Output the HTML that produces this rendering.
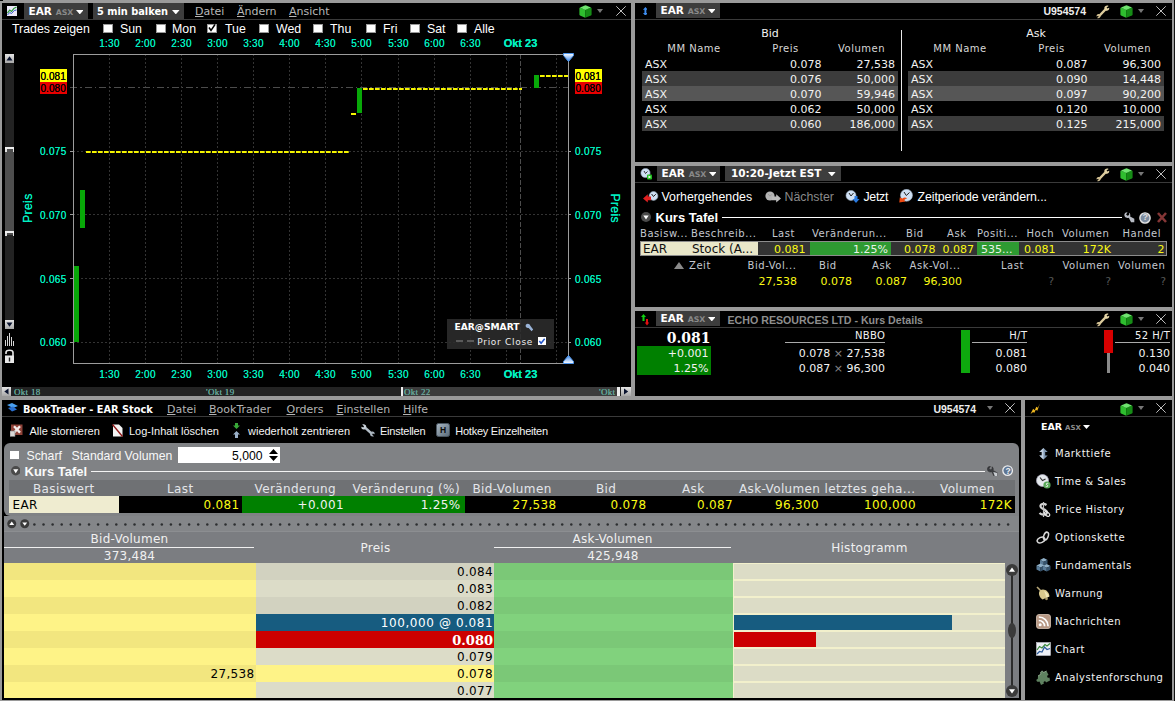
<!DOCTYPE html>
<html><head><meta charset="utf-8"><title>TWS</title>
<style>
html,body{margin:0;padding:0;}
body{width:1175px;height:701px;background:#9a9a9a;position:relative;overflow:hidden;font-family:"Liberation Sans",sans-serif;}
div,span,svg{position:absolute;}
span{white-space:nowrap;line-height:1;color:#fff;}
.tb{font-family:"DejaVu Sans","Liberation Sans",sans-serif;font-weight:bold;font-size:10.5px;color:#fff;transform:scaleY(0.93);transform-origin:0 85%;}
.tg{font-family:"DejaVu Sans","Liberation Sans",sans-serif;font-weight:bold;font-size:7.8px;color:#8a8a8a;}
.mn{font-family:"DejaVu Sans","Liberation Sans",sans-serif;font-size:11px;color:#b8b8b8;}
.v{font-family:"DejaVu Sans","Liberation Sans",sans-serif;font-size:11px;color:#f2f2f2;}
.a12{font-family:"Liberation Sans",sans-serif;font-size:12.35px;color:#fff;}
.ax{font-family:"Liberation Sans",sans-serif;font-size:10px;color:#00f0c0;letter-spacing:0.3px;text-shadow:0 0 0.5px #00f0c0;}
.y{color:#fafa14;}
</style></head>
<body>
<div style="left:2px;top:3px;width:629px;height:393px;background:#000;"></div>
<div style="left:635px;top:3px;width:537px;height:159px;background:#000;"></div>
<div style="left:635px;top:166px;width:537px;height:141px;background:#000;"></div>
<div style="left:635px;top:311px;width:537px;height:85px;background:#000;"></div>
<div style="left:2px;top:400px;width:1019px;height:300px;background:#000;"></div>
<div style="left:1025px;top:400px;width:147px;height:300px;background:#000;"></div>
<div style="left:1174px;top:0px;width:1px;height:701px;background:#111;"></div>
<div style="left:0px;top:0px;width:3px;height:1px;background:#000;"></div>
<svg style="left:7px;top:6px" width="10" height="10" viewBox="0 0 11 10" preserveAspectRatio="none"><rect width="11" height="10" fill="#ece8f8"/><path d="M0.5,7 L3,4 L5,5.5 L7.5,2.5 L10.5,1" stroke="#2a9a3a" stroke-width="1.2" fill="none"/><path d="M0.5,9 L3,6.5 L5,7.5 L8,4.5 L10.5,4" stroke="#3355cc" stroke-width="1" fill="none"/></svg>
<div style="left:24px;top:3px;width:64px;height:16px;background:#3d3d3d;"></div>
<span class="tb" style="top:6.3px;left:28.5px;">EAR</span>
<span class="tg" style="top:8.8px;left:55.7px;">ASX</span>
<svg style="left:75.6px;top:10px" width="7.6" height="4.4" viewBox="0 0 7.6 4.4"><polygon points="0,0 7.6,0 3.8,4.4" fill="#fff"/></svg>
<div style="left:93px;top:3px;width:91px;height:16px;background:#3d3d3d;"></div>
<span class="tb" style="top:6.8px;left:97px;font-family:'DejaVu Sans Condensed','DejaVu Sans',sans-serif;font-size:10.9px;">5 min balken</span>
<svg style="left:172px;top:10px" width="7.6" height="4.4" viewBox="0 0 7.6 4.4"><polygon points="0,0 7.6,0 3.8,4.4" fill="#fff"/></svg>
<span class="mn" style="top:6px;left:195px;"><u>D</u>atei</span>
<span class="mn" style="top:6px;left:237px;"><u>Ä</u>ndern</span>
<span class="mn" style="top:6px;left:289px;"><u>A</u>nsicht</span>
<svg style="left:579.0px;top:4.6px" width="13" height="13" viewBox="0 0 13 13">
<path d="M1,2.6 Q0.4,2.9 0.4,3.6 V9.6 Q0.4,10.3 1,10.6 L6.2,12.8 L6.2,4.8 Z" fill="#2fbe2f"/>
<path d="M12,2.6 Q12.6,2.9 12.6,3.6 V9.6 Q12.6,10.3 12,10.6 L6.2,12.8 L6.2,4.8 Z" fill="#168c16"/>
<path d="M1,2.6 L5.8,0.4 Q6.5,0.2 7.2,0.4 L12,2.6 L6.2,5 Z" fill="#6fe46f"/></svg>
<svg style="left:597px;top:9px" width="6" height="4" viewBox="0 0 6 4"><polygon points="0,0 6,0 3.0,4" fill="#777"/></svg>
<svg style="left:616px;top:6px" width="10" height="10" viewBox="0 0 10 10"><path d="M0.3,0.3 L9.7,9.7 M9.7,0.3 L0.3,9.7" stroke="#d4d4d4" stroke-width="0.9" fill="none"/></svg>
<div style="left:2px;top:19px;width:629px;height:1px;background:#3a3a3a;"></div>
<span class="a12" style="top:23px;left:12px;">Trades zeigen</span>
<div style="left:103px;top:23.5px;width:9.5px;height:9.5px;background:#fff;border:1px solid #999;box-sizing:border-box;"></div>
<span class="a12" style="top:23px;left:120px;">Sun</span>
<div style="left:156px;top:23.5px;width:9.5px;height:9.5px;background:#fff;border:1px solid #999;box-sizing:border-box;"></div>
<span class="a12" style="top:23px;left:172px;">Mon</span>
<div style="left:207px;top:23.5px;width:9.5px;height:9.5px;background:#fff;border:1px solid #999;box-sizing:border-box;"></div>
<span class="a12" style="top:23px;left:225px;">Tue</span>
<div style="left:259px;top:23.5px;width:9.5px;height:9.5px;background:#fff;border:1px solid #999;box-sizing:border-box;"></div>
<span class="a12" style="top:23px;left:276px;">Wed</span>
<div style="left:313px;top:23.5px;width:9.5px;height:9.5px;background:#fff;border:1px solid #999;box-sizing:border-box;"></div>
<span class="a12" style="top:23px;left:330px;">Thu</span>
<div style="left:366px;top:23.5px;width:9.5px;height:9.5px;background:#fff;border:1px solid #999;box-sizing:border-box;"></div>
<span class="a12" style="top:23px;left:383px;">Fri</span>
<div style="left:410px;top:23.5px;width:9.5px;height:9.5px;background:#fff;border:1px solid #999;box-sizing:border-box;"></div>
<span class="a12" style="top:23px;left:427px;">Sat</span>
<div style="left:457px;top:23.5px;width:9.5px;height:9.5px;background:#fff;border:1px solid #999;box-sizing:border-box;"></div>
<span class="a12" style="top:23px;left:474px;">Alle</span>
<svg style="left:207px;top:23px" width="10" height="10" viewBox="0 0 10 10"><path d="M2,4.5 L4,7.5 L8,1.5" stroke="#000" stroke-width="1.5" fill="none"/></svg>
<svg style="left:0;top:0" width="632" height="400" viewBox="0 0 632 400" shape-rendering="crispEdges"><line x1="109.5" y1="54" x2="109.5" y2="363" stroke="#333" stroke-dasharray="2,2"/><line x1="145.5" y1="54" x2="145.5" y2="363" stroke="#333" stroke-dasharray="2,2"/><line x1="181.5" y1="54" x2="181.5" y2="363" stroke="#333" stroke-dasharray="2,2"/><line x1="217.5" y1="54" x2="217.5" y2="363" stroke="#333" stroke-dasharray="2,2"/><line x1="253.5" y1="54" x2="253.5" y2="363" stroke="#333" stroke-dasharray="2,2"/><line x1="289.5" y1="54" x2="289.5" y2="363" stroke="#333" stroke-dasharray="2,2"/><line x1="325.5" y1="54" x2="325.5" y2="363" stroke="#333" stroke-dasharray="2,2"/><line x1="361.5" y1="54" x2="361.5" y2="363" stroke="#333" stroke-dasharray="2,2"/><line x1="398.5" y1="54" x2="398.5" y2="363" stroke="#333" stroke-dasharray="2,2"/><line x1="434.5" y1="54" x2="434.5" y2="363" stroke="#333" stroke-dasharray="2,2"/><line x1="470.5" y1="54" x2="470.5" y2="363" stroke="#333" stroke-dasharray="2,2"/><line x1="506.5" y1="54" x2="506.5" y2="363" stroke="#333" stroke-dasharray="2,2"/><line x1="556.5" y1="54" x2="556.5" y2="363" stroke="#333" stroke-dasharray="2,2"/><line x1="73" y1="151.5" x2="568" y2="151.5" stroke="#333" stroke-dasharray="2,2"/><line x1="73" y1="214.5" x2="568" y2="214.5" stroke="#333" stroke-dasharray="2,2"/><line x1="73" y1="278.5" x2="568" y2="278.5" stroke="#333" stroke-dasharray="2,2"/><line x1="73" y1="342.5" x2="568" y2="342.5" stroke="#333" stroke-dasharray="2,2"/><line x1="70" y1="87.5" x2="568" y2="87.5" stroke="#4c4c4c" stroke-dasharray="7,3,1.5,3"/><line x1="520.5" y1="54" x2="520.5" y2="363" stroke="#4c4c4c" stroke-width="1" stroke-dasharray="5,2"/><path d="M73.5,363.5 L73.5,54.5 L568.5,54.5 L568.5,363.5 Z" stroke="#9c9c9c" fill="none"/><line x1="70" y1="151.5" x2="73" y2="151.5" stroke="#9c9c9c"/><line x1="568" y1="151.5" x2="571" y2="151.5" stroke="#9c9c9c"/><line x1="70" y1="214.5" x2="73" y2="214.5" stroke="#9c9c9c"/><line x1="568" y1="214.5" x2="571" y2="214.5" stroke="#9c9c9c"/><line x1="70" y1="278.5" x2="73" y2="278.5" stroke="#9c9c9c"/><line x1="568" y1="278.5" x2="571" y2="278.5" stroke="#9c9c9c"/><line x1="70" y1="342.5" x2="73" y2="342.5" stroke="#9c9c9c"/><line x1="568" y1="342.5" x2="571" y2="342.5" stroke="#9c9c9c"/><rect x="74" y="266" width="5" height="76" fill="#08a808"/><rect x="80" y="190" width="5" height="38" fill="#08a808"/><rect x="357" y="88" width="5" height="25" fill="#08a808"/><rect x="534" y="75" width="5" height="13" fill="#08a808"/><line x1="86" y1="152" x2="350" y2="152" stroke="#f4f400" stroke-width="2" stroke-dasharray="4.7,1.3" shape-rendering="auto"/><line x1="351" y1="114" x2="356" y2="114" stroke="#f4f400" stroke-width="2"/><line x1="363" y1="89" x2="522" y2="89" stroke="#f4f400" stroke-width="2" stroke-dasharray="4.7,1.3" shape-rendering="auto"/><line x1="540" y1="76" x2="568" y2="76" stroke="#f4f400" stroke-width="2" stroke-dasharray="4.7,1.3" shape-rendering="auto"/></svg>
<span class="ax" style="top:38.5px;left:-40.5px;width:300px;text-align:center;">1:30</span>
<span class="ax" style="top:369.5px;left:-40.5px;width:300px;text-align:center;">1:30</span>
<span class="ax" style="top:38.5px;left:-4.5px;width:300px;text-align:center;">2:00</span>
<span class="ax" style="top:369.5px;left:-4.5px;width:300px;text-align:center;">2:00</span>
<span class="ax" style="top:38.5px;left:31.5px;width:300px;text-align:center;">2:30</span>
<span class="ax" style="top:369.5px;left:31.5px;width:300px;text-align:center;">2:30</span>
<span class="ax" style="top:38.5px;left:67.5px;width:300px;text-align:center;">3:00</span>
<span class="ax" style="top:369.5px;left:67.5px;width:300px;text-align:center;">3:00</span>
<span class="ax" style="top:38.5px;left:103.5px;width:300px;text-align:center;">3:30</span>
<span class="ax" style="top:369.5px;left:103.5px;width:300px;text-align:center;">3:30</span>
<span class="ax" style="top:38.5px;left:139.5px;width:300px;text-align:center;">4:00</span>
<span class="ax" style="top:369.5px;left:139.5px;width:300px;text-align:center;">4:00</span>
<span class="ax" style="top:38.5px;left:175.5px;width:300px;text-align:center;">4:30</span>
<span class="ax" style="top:369.5px;left:175.5px;width:300px;text-align:center;">4:30</span>
<span class="ax" style="top:38.5px;left:211.5px;width:300px;text-align:center;">5:00</span>
<span class="ax" style="top:369.5px;left:211.5px;width:300px;text-align:center;">5:00</span>
<span class="ax" style="top:38.5px;left:248.5px;width:300px;text-align:center;">5:30</span>
<span class="ax" style="top:369.5px;left:248.5px;width:300px;text-align:center;">5:30</span>
<span class="ax" style="top:38.5px;left:284.5px;width:300px;text-align:center;">6:00</span>
<span class="ax" style="top:369.5px;left:284.5px;width:300px;text-align:center;">6:00</span>
<span class="ax" style="top:38.5px;left:320.5px;width:300px;text-align:center;">6:30</span>
<span class="ax" style="top:369.5px;left:320.5px;width:300px;text-align:center;">6:30</span>
<span class="ax" style="top:38px;left:370.5px;width:300px;text-align:center;font-weight:bold;font-size:11px;letter-spacing:0;">Okt 23</span>
<span class="ax" style="top:369px;left:370.5px;width:300px;text-align:center;font-weight:bold;font-size:11px;letter-spacing:0;">Okt 23</span>
<span class="ax" style="top:147.3px;right:1108.5px;">0.075</span>
<span class="ax" style="top:147.3px;left:575px;">0.075</span>
<span class="ax" style="top:211.0px;right:1108.5px;">0.070</span>
<span class="ax" style="top:211.0px;left:575px;">0.070</span>
<span class="ax" style="top:274.6px;right:1108.5px;">0.065</span>
<span class="ax" style="top:274.6px;left:575px;">0.065</span>
<span class="ax" style="top:338.3px;right:1108.5px;">0.060</span>
<span class="ax" style="top:338.3px;left:575px;">0.060</span>
<div style="left:40px;top:69px;width:27px;height:12.5px;background:#ffff00;"></div>
<span class="ax" style="top:71.5px;left:40.5px;color:#000;text-shadow:0 0 0.4px #000;letter-spacing:0.05px;">0.081</span>
<div style="left:40px;top:81.5px;width:27px;height:12.5px;background:#e80000;"></div>
<span class="ax" style="top:84px;left:40.5px;color:#000;text-shadow:0 0 0.4px #000;letter-spacing:0.05px;">0.080</span>
<div style="left:575px;top:69px;width:27px;height:12.5px;background:#ffff00;"></div>
<span class="ax" style="top:71.5px;left:575.5px;color:#000;text-shadow:0 0 0.4px #000;letter-spacing:0.05px;">0.081</span>
<div style="left:575px;top:81.5px;width:27px;height:12.5px;background:#e80000;"></div>
<span class="ax" style="top:84px;left:575.5px;color:#000;text-shadow:0 0 0.4px #000;letter-spacing:0.05px;">0.080</span>
<span class="ax" style="top:0px;left:0px;left:8px;top:202px;font-size:12.3px;transform:rotate(-90deg);transform-origin:center;width:40px;text-align:center;">Preis</span>
<span class="ax" style="top:0px;left:0px;left:594.5px;top:202px;font-size:12.3px;transform:rotate(90deg);transform-origin:center;width:40px;text-align:center;">Preis</span>
<div style="left:5px;top:54px;width:9px;height:275px;background:#232323;"></div>
<div style="left:5px;top:54px;width:9px;height:9px;background:linear-gradient(#e4e4e4,#a8a8a8);"></div>
<svg style="left:5px;top:54px" width="9" height="9" viewBox="0 0 9 9"><polygon points="4.5,2.3 7.5,6.5 1.5,6.5" fill="#0a1430"/></svg>
<div style="left:5px;top:148px;width:9px;height:87px;background:#4e4e4e;"></div>
<div style="left:5px;top:147px;width:9px;height:2px;background:#f0f0f0;"></div>
<div style="left:5px;top:149px;width:1.5px;height:3px;background:#e0e0e0;"></div>
<div style="left:12.5px;top:149px;width:1.5px;height:3px;background:#e0e0e0;"></div>
<div style="left:5px;top:231px;width:9px;height:2px;background:#f0f0f0;"></div>
<div style="left:5px;top:233px;width:1.5px;height:3px;background:#e0e0e0;"></div>
<div style="left:12.5px;top:233px;width:1.5px;height:3px;background:#e0e0e0;"></div>
<div style="left:5px;top:320px;width:9px;height:9px;background:linear-gradient(#e4e4e4,#a8a8a8);"></div>
<svg style="left:5px;top:320px" width="9" height="9" viewBox="0 0 9 9"><polygon points="4.5,6.7 7.5,2.5 1.5,2.5" fill="#0a1430"/></svg>
<svg style="left:5px;top:333px" width="9" height="13" viewBox="0 0 9 13" shape-rendering="crispEdges"><path d="M0.5,13 V7 M2.5,13 V3 M4.5,13 V0 M6.5,13 V4 M8.5,13 V8" stroke="#d8d8d8" stroke-width="1"/></svg>
<svg style="left:5px;top:349px" width="9" height="14" viewBox="0 0 9 14"><path d="M1,5 V3.5 C1,0.5 8,0.5 8,3.5 V7" stroke="#e8e8e8" stroke-width="1.6" fill="none"/><rect x="0" y="6.5" width="9" height="7.5" fill="#e8e8e8"/><rect x="3.8" y="8.5" width="1.4" height="4" fill="#222"/></svg>
<div style="left:447px;top:319px;width:107px;height:30px;background:rgba(44,44,44,0.88);"></div>
<span class="tb" style="top:323.3px;left:454.5px;font-size:9.15px;">EAR@SMART</span>
<span class="mn" style="top:337.6px;left:477.3px;font-size:9px;letter-spacing:0.7px;color:#ececec;">Prior Close</span>
<div style="left:455.5px;top:339.5px;width:7px;height:2px;background:#5a5a5a;"></div>
<div style="left:466.5px;top:339.5px;width:7px;height:2px;background:#5a5a5a;"></div>
<svg style="left:525px;top:323px" width="9" height="9" viewBox="0 0 11 11"><path d="M1,2 C3,0 6,1 6.5,3.5 L10,8 L8,10 L4.5,6 C2,6.5 0,4.5 1,2 Z" fill="#9ab4d8"/></svg>
<div style="left:537.7px;top:337px;width:8px;height:8px;background:#fff;"></div>
<svg style="left:537.7px;top:337px" width="8" height="8" viewBox="0 0 9 9"><path d="M1.5,4.5 L3.5,7 L7.5,2" stroke="#2255cc" stroke-width="1.7" fill="none"/></svg>
<div style="left:2px;top:387px;width:629px;height:9px;background:#232323;"></div>
<div style="left:402px;top:387px;width:216px;height:9px;background:#3c3c3c;"></div>
<div style="left:2px;top:387px;width:9px;height:9px;background:linear-gradient(#e4e4e4,#a8a8a8);"></div>
<svg style="left:2px;top:387px" width="9" height="9" viewBox="0 0 9 9"><polygon points="2.3,4.5 6.5,1.5 6.5,7.5" fill="#0a1430"/></svg>
<div style="left:621px;top:387px;width:10px;height:9px;background:linear-gradient(#e4e4e4,#a8a8a8);"></div>
<svg style="left:621px;top:387px" width="10" height="9" viewBox="0 0 10 9"><polygon points="7.2,4.5 3.0,1.5 3.0,7.5" fill="#0a1430"/></svg>
<div style="left:401px;top:387px;width:2px;height:9px;background:#eee;"></div>
<div style="left:617px;top:387px;width:3px;height:9px;background:#eee;"></div>
<span class="ax" style="top:387.5px;left:14px;font-family:'Liberation Serif',serif;font-size:9px;color:#8c8c8c;">Okt 18</span>
<span class="ax" style="top:387.5px;left:206px;font-family:'Liberation Serif',serif;font-size:9px;color:#8c8c8c;">'Okt 19</span>
<span class="ax" style="top:387.5px;left:404px;font-family:'Liberation Serif',serif;font-size:9px;color:#8c8c8c;">Okt 22</span>
<span class="ax" style="top:387.5px;left:599px;font-family:'Liberation Serif',serif;font-size:9px;color:#8c8c8c;">'Okt</span>
<svg style="left:563px;top:53px" width="11" height="9" viewBox="0 0 11 9"><defs><linearGradient id="sg" x1="0" y1="0" x2="0" y2="1"><stop offset="0" stop-color="#fff"/><stop offset="1" stop-color="#3a86ea"/></linearGradient></defs><path d="M0.5,0.5 H10.5 V2.5 L5.5,8.5 L0.5,2.5 Z" fill="url(#sg)" stroke="#4f97ee" stroke-width="1"/></svg>
<svg style="left:563px;top:355px" width="11" height="9" viewBox="0 0 11 9"><defs><linearGradient id="sg2" x1="0" y1="0" x2="0" y2="1"><stop offset="0" stop-color="#3a86ea"/><stop offset="1" stop-color="#fff"/></linearGradient></defs><path d="M0.5,8.5 H10.5 V6.5 L5.5,0.5 L0.5,6.5 Z" fill="url(#sg2)" stroke="#4f97ee" stroke-width="1"/></svg>
<svg style="left:642.5px;top:6.5px" width="4.8" height="8.8" viewBox="0 0 6 11"><path d="M3,0 L6,3.5 H4.2 V7.5 H6 L3,11 L0,7.5 H1.8 V3.5 H0 Z" fill="#3d8df0"/></svg>
<div style="left:656px;top:3px;width:64px;height:15px;background:#3d3d3d;"></div>
<span class="tb" style="top:5.3px;left:660.5px;">EAR</span>
<span class="tg" style="top:7.8px;left:687.7px;">ASX</span>
<svg style="left:707.6px;top:9px" width="7.6" height="4.4" viewBox="0 0 7.6 4.4"><polygon points="0,0 7.6,0 3.8,4.4" fill="#fff"/></svg>
<span class="a12" style="top:6px;right:89px;font-weight:bold;font-size:10.5px;color:#eee;">U954574</span>
<svg style="left:1096px;top:4.5px" width="14" height="14" viewBox="0 0 14 14">
<path d="M3.2,11 L10.2,3.6" stroke="#dccb9c" stroke-width="2.3" stroke-linecap="butt" fill="none"/>
<path d="M8.3,3.2 C8.2,1 10.8,-0.2 12.6,0.9 L10.6,2.4 L11.2,3.6 L13.2,2.8 C13.6,5 11.4,6.4 9.6,5.4 Z" fill="#e4d4a6"/>
<path d="M4.6,10.6 C4.9,12.6 2.8,13.8 1,13 L2.6,11.8 L2.2,10.8 L0.6,11.4 C0.2,9.6 2,8.4 3.6,9.2 Z" fill="#d4c294"/></svg>
<svg style="left:1119.5px;top:4.6px" width="13" height="13" viewBox="0 0 13 13">
<path d="M1,2.6 Q0.4,2.9 0.4,3.6 V9.6 Q0.4,10.3 1,10.6 L6.2,12.8 L6.2,4.8 Z" fill="#2fbe2f"/>
<path d="M12,2.6 Q12.6,2.9 12.6,3.6 V9.6 Q12.6,10.3 12,10.6 L6.2,12.8 L6.2,4.8 Z" fill="#168c16"/>
<path d="M1,2.6 L5.8,0.4 Q6.5,0.2 7.2,0.4 L12,2.6 L6.2,5 Z" fill="#6fe46f"/></svg>
<svg style="left:1138px;top:9px" width="6" height="4" viewBox="0 0 6 4"><polygon points="0,0 6,0 3.0,4" fill="#777"/></svg>
<svg style="left:1156px;top:6px" width="10" height="10" viewBox="0 0 10 10"><path d="M0.3,0.3 L9.7,9.7 M9.7,0.3 L0.3,9.7" stroke="#d4d4d4" stroke-width="0.9" fill="none"/></svg>
<div style="left:635px;top:19px;width:537px;height:1px;background:#3a3a3a;"></div>
<span class="v" style="top:28px;left:620px;width:300px;text-align:center;">Bid</span>
<span class="v" style="top:28px;left:886px;width:300px;text-align:center;">Ask</span>
<div style="left:901px;top:30px;width:1px;height:121px;background:#e8e8e8;"></div>
<span class="mn" style="top:43.5px;left:544px;width:300px;text-align:center;font-size:10px;letter-spacing:0.5px;color:#d6d6d6;">MM Name</span>
<span class="mn" style="top:43.5px;left:635.5px;width:300px;text-align:center;font-size:10px;letter-spacing:0.5px;color:#d6d6d6;">Preis</span>
<span class="mn" style="top:43.5px;left:711.5px;width:300px;text-align:center;font-size:10px;letter-spacing:0.5px;color:#d6d6d6;">Volumen</span>
<span class="v" style="top:59px;left:645px;">ASX</span>
<span class="v" style="top:59px;right:353.5px;">0.078</span>
<span class="v" style="top:59px;right:280px;">27,538</span>
<div style="left:642px;top:71px;width:256px;height:15px;background:#3c3c3c;"></div>
<span class="v" style="top:74px;left:645px;">ASX</span>
<span class="v" style="top:74px;right:353.5px;">0.076</span>
<span class="v" style="top:74px;right:280px;">50,000</span>
<div style="left:642px;top:86px;width:256px;height:15px;background:#565656;"></div>
<span class="v" style="top:89px;left:645px;">ASX</span>
<span class="v" style="top:89px;right:353.5px;">0.070</span>
<span class="v" style="top:89px;right:280px;">59,946</span>
<span class="v" style="top:104px;left:645px;">ASX</span>
<span class="v" style="top:104px;right:353.5px;">0.062</span>
<span class="v" style="top:104px;right:280px;">50,000</span>
<div style="left:642px;top:116px;width:256px;height:15px;background:#3c3c3c;"></div>
<span class="v" style="top:119px;left:645px;">ASX</span>
<span class="v" style="top:119px;right:353.5px;">0.060</span>
<span class="v" style="top:119px;right:280px;">186,000</span>
<span class="mn" style="top:43.5px;left:810px;width:300px;text-align:center;font-size:10px;letter-spacing:0.5px;color:#d6d6d6;">MM Name</span>
<span class="mn" style="top:43.5px;left:901.5px;width:300px;text-align:center;font-size:10px;letter-spacing:0.5px;color:#d6d6d6;">Preis</span>
<span class="mn" style="top:43.5px;left:977.5px;width:300px;text-align:center;font-size:10px;letter-spacing:0.5px;color:#d6d6d6;">Volumen</span>
<span class="v" style="top:59px;left:911px;">ASX</span>
<span class="v" style="top:59px;right:87.5px;">0.087</span>
<span class="v" style="top:59px;right:14px;">96,300</span>
<div style="left:908px;top:71px;width:256px;height:15px;background:#3c3c3c;"></div>
<span class="v" style="top:74px;left:911px;">ASX</span>
<span class="v" style="top:74px;right:87.5px;">0.090</span>
<span class="v" style="top:74px;right:14px;">14,448</span>
<div style="left:908px;top:86px;width:256px;height:15px;background:#565656;"></div>
<span class="v" style="top:89px;left:911px;">ASX</span>
<span class="v" style="top:89px;right:87.5px;">0.097</span>
<span class="v" style="top:89px;right:14px;">90,200</span>
<span class="v" style="top:104px;left:911px;">ASX</span>
<span class="v" style="top:104px;right:87.5px;">0.120</span>
<span class="v" style="top:104px;right:14px;">10,000</span>
<div style="left:908px;top:116px;width:256px;height:15px;background:#3c3c3c;"></div>
<span class="v" style="top:119px;left:911px;">ASX</span>
<span class="v" style="top:119px;right:87.5px;">0.125</span>
<span class="v" style="top:119px;right:14px;">215,000</span>
<svg style="left:640px;top:168px" width="13" height="12" viewBox="0 0 13 12"><circle cx="5.5" cy="5" r="4.6" fill="#cfe0f4" stroke="#9ab" stroke-width="0.6"/><path d="M4,3 L5.5,5.5 L7.5,3.5" stroke="#222" stroke-width="0.9" fill="none"/><rect x="7" y="6.5" width="5" height="5" rx="1" fill="#20c020"/><path d="M8.5,7.5 L11,9 L8.5,10.5 Z" fill="#fff"/></svg>
<div style="left:657px;top:166px;width:63px;height:15px;background:#3d3d3d;"></div>
<span class="tb" style="top:168.3px;left:661.5px;">EAR</span>
<span class="tg" style="top:170.8px;left:688.7px;">ASX</span>
<svg style="left:708.6px;top:172px" width="7.6" height="4.4" viewBox="0 0 7.6 4.4"><polygon points="0,0 7.6,0 3.8,4.4" fill="#fff"/></svg>
<div style="left:725px;top:166px;width:116px;height:15px;background:#3d3d3d;"></div>
<span class="tb" style="top:168.3px;left:731px;">10:20-Jetzt EST</span>
<svg style="left:828px;top:172px" width="7.6" height="4.4" viewBox="0 0 7.6 4.4"><polygon points="0,0 7.6,0 3.8,4.4" fill="#fff"/></svg>
<svg style="left:1096px;top:167.5px" width="14" height="14" viewBox="0 0 14 14">
<path d="M3.2,11 L10.2,3.6" stroke="#dccb9c" stroke-width="2.3" stroke-linecap="butt" fill="none"/>
<path d="M8.3,3.2 C8.2,1 10.8,-0.2 12.6,0.9 L10.6,2.4 L11.2,3.6 L13.2,2.8 C13.6,5 11.4,6.4 9.6,5.4 Z" fill="#e4d4a6"/>
<path d="M4.6,10.6 C4.9,12.6 2.8,13.8 1,13 L2.6,11.8 L2.2,10.8 L0.6,11.4 C0.2,9.6 2,8.4 3.6,9.2 Z" fill="#d4c294"/></svg>
<svg style="left:1119.5px;top:167.6px" width="13" height="13" viewBox="0 0 13 13">
<path d="M1,2.6 Q0.4,2.9 0.4,3.6 V9.6 Q0.4,10.3 1,10.6 L6.2,12.8 L6.2,4.8 Z" fill="#2fbe2f"/>
<path d="M12,2.6 Q12.6,2.9 12.6,3.6 V9.6 Q12.6,10.3 12,10.6 L6.2,12.8 L6.2,4.8 Z" fill="#168c16"/>
<path d="M1,2.6 L5.8,0.4 Q6.5,0.2 7.2,0.4 L12,2.6 L6.2,5 Z" fill="#6fe46f"/></svg>
<svg style="left:1138px;top:172px" width="6" height="4" viewBox="0 0 6 4"><polygon points="0,0 6,0 3.0,4" fill="#777"/></svg>
<svg style="left:1156px;top:169px" width="10" height="10" viewBox="0 0 10 10"><path d="M0.3,0.3 L9.7,9.7 M9.7,0.3 L0.3,9.7" stroke="#d4d4d4" stroke-width="0.9" fill="none"/></svg>
<div style="left:635px;top:182px;width:537px;height:1px;background:#3a3a3a;"></div>
<svg style="left:642.5px;top:191px" width="16" height="12" viewBox="0 0 16 12"><circle cx="10.5" cy="5" r="4.4" fill="#cfe0f4" stroke="#9ab" stroke-width="0.6"/><path d="M8.6,3 L10.5,5.5 L12.8,3.2" stroke="#222" stroke-width="1" fill="none"/><path d="M0,7.4 L4.8,3.2 V5.6 H8 V9.2 H4.8 V11.6 Z" fill="#e02020"/></svg>
<span class="a12" style="top:190.5px;left:661.5px;">Vorhergehendes</span>
<svg style="left:764.5px;top:191px" width="17" height="12" viewBox="0 0 17 12"><circle cx="5" cy="5" r="4.6" fill="#b4b4b4"/><path d="M3,3 L5,5.2 L7,3.2" stroke="#999" stroke-width="0.9" fill="none"/><path d="M16,7.4 L11.2,3.2 V5.6 H7 V9.2 H11.2 V11.6 Z" fill="#bcbcbc"/></svg>
<span class="a12" style="top:190.5px;left:784.5px;color:#8a8a8a;">Nächster</span>
<svg style="left:845px;top:190px" width="15" height="13" viewBox="0 0 15 13"><circle cx="6" cy="5.5" r="5" fill="#cfe0f4" stroke="#9ab" stroke-width="0.6"/><path d="M4,3 L6,6 L8.5,3" stroke="#222" stroke-width="1" fill="none"/><path d="M11,13 L7.5,9 H9.5 V6 H12.5 V9 H14.5 Z" fill="#2a7ae0"/></svg>
<span class="a12" style="top:190.5px;left:863.5px;letter-spacing:-0.3px;">Jetzt</span>
<svg style="left:899px;top:189px" width="14" height="14" viewBox="0 0 14 14"><circle cx="7.5" cy="6.3" r="6" fill="#cfe0f4" stroke="#9ab" stroke-width="0.6"/><path d="M5,3 L7.3,6.5 L10.5,3.5" stroke="#222" stroke-width="1" fill="none"/><path d="M0.3,13.4 L0.8,8.6 L3.4,9.4 C5,8 7,8.4 8.2,9.2 C6.4,9.8 5.6,10.6 5.4,11.4 L6.6,12.6 Z" fill="#ee4a12"/></svg>
<span class="a12" style="top:190.5px;left:917.5px;letter-spacing:-0.07px;">Zeitperiode verändern...</span>
<svg style="left:641px;top:212px" width="10" height="10" viewBox="0 0 10 10"><circle cx="5" cy="5" r="5" fill="#4a4a4a"/><path d="M2.3,3.5 H7.7 L5,7.5 Z" fill="#fff"/></svg>
<span class="a12" style="top:210.5px;left:655.5px;font-weight:bold;font-size:13px;">Kurs Tafel</span>
<div style="left:722px;top:217px;width:400px;height:1px;background:#fff;"></div>
<svg style="left:1124.3px;top:212.3px" width="10.5" height="10.5" viewBox="0 0 11 11"><path d="M3.6,0.4 C1,0.2 -0.4,2.8 0.8,4.8 C1.8,6.4 3.8,6.6 5,6 L7.4,10.8 L10.8,10.8 L10.8,7.2 L6.4,4.6 C7,3 6.4,1.4 5.2,0.8 L5.4,3.2 L3.6,4 L2.2,2.6 Z" fill="#b8bcc4"/></svg>
<svg style="left:1139px;top:211.5px" width="12" height="12" viewBox="0 0 11 11"><circle cx="5.5" cy="5.5" r="4.7" fill="#7c8ca0" stroke="#e4e4e4" stroke-width="1.3"/></svg>
<span class="a12" style="top:213px;left:1142.5px;font-size:9px;font-weight:bold;color:#ddd;">?</span>
<svg style="left:1157px;top:212px" width="10" height="11" viewBox="0 0 10 11"><path d="M1,1 L9,10 M9,1 L1,10" stroke="#843636" stroke-width="2.6" fill="none"/></svg>
<span class="mn" style="top:228.5px;left:640px;font-size:10px;letter-spacing:0.55px;color:#c4c8d0;">Basisw...</span>
<span class="mn" style="top:228.5px;left:691px;font-size:10px;letter-spacing:0.55px;color:#c4c8d0;">Beschreib...</span>
<span class="mn" style="top:228.5px;left:772px;font-size:10px;letter-spacing:0.55px;color:#c4c8d0;">Last</span>
<span class="mn" style="top:228.5px;left:812px;font-size:10px;letter-spacing:0.55px;color:#c4c8d0;">Veränderun...</span>
<span class="mn" style="top:228.5px;left:906px;font-size:10px;letter-spacing:0.55px;color:#c4c8d0;">Bid</span>
<span class="mn" style="top:228.5px;left:947px;font-size:10px;letter-spacing:0.55px;color:#c4c8d0;">Ask</span>
<span class="mn" style="top:228.5px;left:977px;font-size:10px;letter-spacing:0.55px;color:#c4c8d0;">Positi...</span>
<span class="mn" style="top:228.5px;left:1026.5px;font-size:10px;letter-spacing:0.55px;color:#c4c8d0;">Hoch</span>
<span class="mn" style="top:228.5px;left:1062px;font-size:10px;letter-spacing:0.55px;color:#c4c8d0;">Volumen</span>
<span class="mn" style="top:228.5px;left:1122.5px;font-size:10px;letter-spacing:0.55px;color:#c4c8d0;">Handel</span>
<div style="left:640px;top:241px;width:527px;height:15px;background:#333;"></div>
<div style="left:640px;top:241px;width:118px;height:15px;background:#e9e7c9;"></div>
<div style="left:640px;top:241px;width:527px;height:1px;background:#8c8c8c;"></div>
<div style="left:640px;top:241px;width:1px;height:15px;background:#8c8c8c;"></div>
<div style="left:640px;top:255px;width:527px;height:1px;background:#8c8c8c;"></div>
<div style="left:1166.3px;top:241px;width:1px;height:15px;background:#8c8c8c;"></div>
<div style="left:809.5px;top:242px;width:81.5px;height:13px;background:#2e9a32;"></div>
<div style="left:977px;top:242px;width:42px;height:13px;background:#2e9a32;"></div>
<span class="v" style="top:243px;left:643px;color:#111;font-size:12px;">EAR</span>
<span class="v" style="top:243px;left:692px;color:#111;font-size:12px;">Stock (A...</span>
<span class="v y" style="top:244px;right:369.5px;">0.081</span>
<span class="v" style="top:244px;right:287px;color:#e8f4e8;">1.25%</span>
<span class="v y" style="top:244px;right:239.5px;">0.078</span>
<span class="v y" style="top:244px;right:201px;">0.087</span>
<span class="v" style="top:244px;left:981px;color:#e8f4e8;">535...</span>
<span class="v y" style="top:244px;right:119.5px;">0.081</span>
<span class="v y" style="top:244px;right:64px;">172K</span>
<span class="v y" style="top:244px;right:10.5px;">2</span>
<svg style="left:674px;top:262px" width="10" height="7" viewBox="0 0 10 7"><path d="M0,7 L5,0 L10,7 Z" fill="#8a8a8a"/></svg>
<span class="mn" style="top:260.5px;left:689px;font-size:10px;letter-spacing:0.55px;color:#c4c8d0;">Zeit</span>
<span class="mn" style="top:260.5px;left:747.5px;font-size:10px;letter-spacing:0.55px;color:#c4c8d0;">Bid-Vol...</span>
<span class="mn" style="top:260.5px;left:819px;font-size:10px;letter-spacing:0.55px;color:#c4c8d0;">Bid</span>
<span class="mn" style="top:260.5px;left:872px;font-size:10px;letter-spacing:0.55px;color:#c4c8d0;">Ask</span>
<span class="mn" style="top:260.5px;left:909.5px;font-size:10px;letter-spacing:0.55px;color:#c4c8d0;">Ask-Vol...</span>
<span class="mn" style="top:260.5px;left:1001px;font-size:10px;letter-spacing:0.55px;color:#c4c8d0;">Last</span>
<span class="mn" style="top:260.5px;left:1062.5px;font-size:10px;letter-spacing:0.55px;color:#c4c8d0;">Volumen</span>
<span class="mn" style="top:260.5px;left:1118px;font-size:10px;letter-spacing:0.55px;color:#c4c8d0;">Volumen</span>
<span class="v y" style="top:276px;right:378px;">27,538</span>
<span class="v y" style="top:276px;right:323px;">0.078</span>
<span class="v y" style="top:276px;right:268px;">0.087</span>
<span class="v y" style="top:276px;right:213px;">96,300</span>
<span class="v" style="top:276px;right:121px;color:#555;">?</span>
<span class="v" style="top:276px;right:64px;color:#555;">?</span>
<span class="v" style="top:276px;right:9px;color:#555;">?</span>
<svg style="left:641px;top:314px" width="9" height="12" viewBox="0 0 9 12"><path d="M2.5,0 L5,3 H3.5 V7 H1.5 V3 H0 Z" fill="#10d010"/><path d="M6,11.5 L3.8,8.5 H5 V5 H7 V8.5 H8.2 Z" fill="#e01010"/></svg>
<div style="left:656px;top:311px;width:64px;height:15px;background:#3d3d3d;"></div>
<span class="tb" style="top:313.3px;left:660.5px;">EAR</span>
<span class="tg" style="top:315.8px;left:687.7px;">ASX</span>
<svg style="left:707.6px;top:317px" width="7.6" height="4.4" viewBox="0 0 7.6 4.4"><polygon points="0,0 7.6,0 3.8,4.4" fill="#fff"/></svg>
<span class="a12" style="top:314.5px;left:727.5px;font-size:10.65px;font-weight:bold;color:#8e8e8e;">ECHO RESOURCES LTD - Kurs Details</span>
<svg style="left:1096px;top:312.5px" width="14" height="14" viewBox="0 0 14 14">
<path d="M3.2,11 L10.2,3.6" stroke="#dccb9c" stroke-width="2.3" stroke-linecap="butt" fill="none"/>
<path d="M8.3,3.2 C8.2,1 10.8,-0.2 12.6,0.9 L10.6,2.4 L11.2,3.6 L13.2,2.8 C13.6,5 11.4,6.4 9.6,5.4 Z" fill="#e4d4a6"/>
<path d="M4.6,10.6 C4.9,12.6 2.8,13.8 1,13 L2.6,11.8 L2.2,10.8 L0.6,11.4 C0.2,9.6 2,8.4 3.6,9.2 Z" fill="#d4c294"/></svg>
<svg style="left:1119.5px;top:312.6px" width="13" height="13" viewBox="0 0 13 13">
<path d="M1,2.6 Q0.4,2.9 0.4,3.6 V9.6 Q0.4,10.3 1,10.6 L6.2,12.8 L6.2,4.8 Z" fill="#2fbe2f"/>
<path d="M12,2.6 Q12.6,2.9 12.6,3.6 V9.6 Q12.6,10.3 12,10.6 L6.2,12.8 L6.2,4.8 Z" fill="#168c16"/>
<path d="M1,2.6 L5.8,0.4 Q6.5,0.2 7.2,0.4 L12,2.6 L6.2,5 Z" fill="#6fe46f"/></svg>
<svg style="left:1138px;top:317px" width="6" height="4" viewBox="0 0 6 4"><polygon points="0,0 6,0 3.0,4" fill="#777"/></svg>
<svg style="left:1156px;top:314px" width="10" height="10" viewBox="0 0 10 10"><path d="M0.3,0.3 L9.7,9.7 M9.7,0.3 L0.3,9.7" stroke="#d4d4d4" stroke-width="0.9" fill="none"/></svg>
<div style="left:635px;top:327px;width:537px;height:1px;background:#3a3a3a;"></div>
<span class="v" style="top:331.2px;right:464.5px;font-family:'DejaVu Serif','Liberation Serif',serif;font-weight:bold;font-size:14px;color:#fff;">0.081</span>
<div style="left:637px;top:346px;width:74px;height:29px;background:#008000;"></div>
<span class="v" style="top:348px;right:466.5px;">+0.001</span>
<span class="v" style="top:363.2px;right:466.5px;">1.25%</span>
<span class="v" style="top:331.2px;right:290px;font-size:10px;letter-spacing:0.4px;margin-right:-0.4px;">NBBO</span>
<div style="left:785px;top:342px;width:100px;height:1px;background:#aaa;"></div>
<span class="v" style="top:348px;right:290px;">0.078 <span style="position:static;color:#888">×</span> 27,538</span>
<span class="v" style="top:363.2px;right:290px;">0.087 <span style="position:static;color:#888">×</span> 96,300</span>
<div style="left:961px;top:330px;width:9px;height:43px;background:#0ea80e;"></div>
<span class="v" style="top:331.2px;right:148px;font-size:10px;letter-spacing:0.4px;margin-right:-0.4px;">H/T</span>
<div style="left:972px;top:342px;width:55px;height:1px;background:#aaa;"></div>
<span class="v" style="top:348px;right:148px;">0.081</span>
<span class="v" style="top:363.2px;right:148px;">0.080</span>
<div style="left:1107px;top:330px;width:3px;height:43px;background:#8a8a8a;"></div>
<div style="left:1104px;top:330px;width:9px;height:23px;background:#d80000;"></div>
<span class="v" style="top:331.2px;right:5px;font-size:10px;letter-spacing:0.4px;margin-right:-0.4px;">52 H/T</span>
<div style="left:1115px;top:342px;width:55px;height:1px;background:#aaa;"></div>
<span class="v" style="top:348px;right:5px;">0.130</span>
<span class="v" style="top:363.2px;right:5px;">0.040</span>
<svg style="left:7px;top:403px" width="11" height="9" viewBox="0 0 11 9"><path d="M0,2 L5,0 L11,3 L6,5 Z" fill="#4aa0f0"/><path d="M1,5 L6,3.5 L10,6.5 L5,8.5 Z" fill="#2a70d0"/></svg>
<span class="tb" style="top:405.1px;left:23px;font-family:'DejaVu Sans Condensed','DejaVu Sans',sans-serif;font-size:10.9px;">BookTrader - EAR Stock</span>
<span class="mn" style="top:403.5px;left:167px;font-size:11px;color:#b4b4b4;"><u>D</u>atei</span>
<span class="mn" style="top:403.5px;left:209px;font-size:11px;color:#b4b4b4;"><u>B</u>ookTrader</span>
<span class="mn" style="top:403.5px;left:286.5px;font-size:11px;color:#b4b4b4;"><u>O</u>rders</span>
<span class="mn" style="top:403.5px;left:336.5px;font-size:11px;color:#b4b4b4;"><u>E</u>instellen</span>
<span class="mn" style="top:403.5px;left:403px;font-size:11px;color:#b4b4b4;"><u>H</u>ilfe</span>
<span class="a12" style="top:404px;right:199px;font-weight:bold;font-size:10.5px;color:#eee;">U954574</span>
<svg style="left:987px;top:406px" width="6" height="4" viewBox="0 0 6 4"><polygon points="0,0 6,0 3.0,4" fill="#777"/></svg>
<svg style="left:1005px;top:403px" width="10" height="10" viewBox="0 0 10 10"><path d="M0.3,0.3 L9.7,9.7 M9.7,0.3 L0.3,9.7" stroke="#d4d4d4" stroke-width="0.9" fill="none"/></svg>
<div style="left:2px;top:416px;width:1019px;height:1px;background:#3a3a3a;"></div>
<span class="a12" style="top:426px;left:29.5px;font-size:11px;color:#f4f4f4;">Alle stornieren</span>
<span class="a12" style="top:426px;left:129px;font-size:11px;color:#f4f4f4;">Log-Inhalt löschen</span>
<span class="a12" style="top:426px;left:248px;font-size:11px;color:#f4f4f4;">wiederholt zentrieren</span>
<span class="a12" style="top:426px;left:380px;font-size:11px;color:#f4f4f4;letter-spacing:-0.24px;">Einstellen</span>
<span class="a12" style="top:426px;left:455.3px;font-size:11px;color:#f4f4f4;letter-spacing:-0.25px;">Hotkey Einzelheiten</span>
<svg style="left:10px;top:424px" width="13" height="13" viewBox="0 0 13 13"><rect x="1" y="0.5" width="11.5" height="10.5" fill="#8e4238"/><path d="M4,2.2 L10,8.6 M10,2.2 L4,8.6" stroke="#f4ecec" stroke-width="2.3"/><rect x="0" y="7" width="5" height="5.5" fill="#d8d8d8" stroke="#777" stroke-width="0.6"/></svg>
<svg style="left:112px;top:424px" width="11" height="13" viewBox="0 0 11 13"><path d="M1,0.5 H7 L10.5,4 V12.5 H1 Z" fill="#f4f4f4"/><path d="M0.5,0.5 L10.5,12.5" stroke="#901818" stroke-width="1.4"/></svg>
<svg style="left:232px;top:423px" width="9" height="15" viewBox="0 0 9 15"><path d="M4.5,6 L1,2.5 H3 V0 H6 V2.5 H8 Z" fill="#38a838"/><path d="M4.5,8 L1,11.5 H3 V15 H6 V11.5 H8 Z" fill="#9ab0c8"/></svg>
<svg style="left:360.5px;top:424px" width="14" height="13" viewBox="0 0 14 13"><path d="M3.4,3 L10.6,9.6" stroke="#b4bec8" stroke-width="2.4" fill="none"/><path d="M5.2,3 C5.6,0.8 3,-0.4 1.2,0.6 L3,2.2 L2.4,3.4 L0.4,2.8 C0,5 2.2,6.2 4,5.2 Z" fill="#c8d0d8"/><path d="M9.2,9.6 C8.6,11.8 11,13.2 13,12.2 L11.2,10.8 L11.8,9.6 L13.6,10.2 C14,8 12,6.8 10.2,7.8 Z" fill="#aab4be"/></svg>
<svg style="left:436px;top:422.5px" width="14" height="14" viewBox="0 0 14 14"><defs><linearGradient id="hk" x1="0" y1="0" x2="1" y2="1"><stop offset="0" stop-color="#aab8c4"/><stop offset="1" stop-color="#5a6a78"/></linearGradient></defs><rect x="0.5" y="0.5" width="13" height="13" rx="2" fill="url(#hk)" stroke="#4a5660" stroke-width="1"/></svg>
<span class="a12" style="top:425.5px;left:440px;font-size:8.5px;font-weight:bold;color:#0a0a0a;">H</span>
<div style="left:4px;top:443px;width:1015px;height:73px;background:#808285;border-radius:6px 6px 0 6px;"></div>
<div style="left:4px;top:516px;width:1015px;height:182px;background:#7b7d81;"></div>
<div style="left:4px;top:516px;width:1015px;height:15px;background:#848689;"></div>
<div style="left:4px;top:531px;width:1015px;height:1px;background:#8c8e91;"></div>
<div style="left:10px;top:451px;width:9px;height:8px;background:#fff;"></div>
<span class="a12" style="top:450px;left:26.5px;font-size:12.25px;color:#f8f8f8;">Scharf</span>
<span class="a12" style="top:450px;left:71.5px;font-size:12.25px;color:#f8f8f8;">Standard Volumen</span>
<div style="left:178px;top:447px;width:102px;height:16px;background:#fff;"></div>
<span class="a12" style="top:449.8px;right:912.5px;font-size:12.2px;color:#000;">5,000</span>
<svg style="left:269px;top:449px" width="9" height="12" viewBox="0 0 9 12"><path d="M0,5 L4.5,0 L9,5 Z M0,7 L4.5,12 L9,7 Z" fill="#000"/></svg>
<svg style="left:10.5px;top:466px" width="9.5" height="9.5" viewBox="0 0 10 10"><circle cx="5" cy="5" r="5" fill="#4a4a4a"/><path d="M2.3,3.5 H7.7 L5,7.5 Z" fill="#fff"/></svg>
<span class="a12" style="top:464.6px;left:24.5px;font-weight:bold;font-size:13px;color:#fafafa;">Kurs Tafel</span>
<div style="left:91px;top:471px;width:894px;height:1px;background:#f4f4f4;"></div>
<svg style="left:987px;top:465.7px" width="10.5" height="10.5" viewBox="0 0 11 11"><path d="M3.6,0.4 C1,0.2 -0.4,2.8 0.8,4.8 C1.8,6.4 3.8,6.6 5,6 L7.4,10.8 L10.8,10.8 L10.8,7.2 L6.4,4.6 C7,3 6.4,1.4 5.2,0.8 L5.4,3.2 L3.6,4 L2.2,2.6 Z" fill="#3a3c40" stroke="#2a2a2a" stroke-width="0.5"/><path d="M6.6,6.4 L10.8,7.4 L10.8,10.8 L8.2,10.8 Z" fill="#c8ccd0"/></svg>
<svg style="left:1002.3px;top:465.4px" width="11.2" height="11.2" viewBox="0 0 11 11"><circle cx="5.5" cy="5.5" r="4.7" fill="#5e7694" stroke="#ececec" stroke-width="1.3"/></svg>
<span class="a12" style="top:466.7px;left:1005.6px;font-size:8.5px;font-weight:bold;color:#f0f0f0;">?</span>
<div style="left:9px;top:480px;width:1006px;height:16px;background:#6f7174;"></div>
<span class="v" style="top:482.8px;left:33px;font-size:12px;letter-spacing:0.37px;color:#e4e6ea;">Basiswert</span>
<span class="v" style="top:482.8px;left:167px;font-size:12px;letter-spacing:0.37px;color:#e4e6ea;">Last</span>
<span class="v" style="top:482.8px;left:254.5px;font-size:12px;letter-spacing:0.37px;color:#e4e6ea;">Veränderung</span>
<span class="v" style="top:482.8px;left:352.5px;font-size:12px;letter-spacing:0.37px;color:#e4e6ea;">Veränderung (%)</span>
<span class="v" style="top:482.8px;left:472.5px;font-size:12px;letter-spacing:0.37px;color:#e4e6ea;">Bid-Volumen</span>
<span class="v" style="top:482.8px;left:596px;font-size:12px;letter-spacing:0.37px;color:#e4e6ea;">Bid</span>
<span class="v" style="top:482.8px;left:682px;font-size:12px;letter-spacing:0.37px;color:#e4e6ea;">Ask</span>
<span class="v" style="top:482.8px;left:739px;font-size:12px;letter-spacing:0.37px;color:#e4e6ea;">Ask-Volumen letztes geha...</span>
<span class="v" style="top:482.8px;left:940px;font-size:12px;letter-spacing:0.37px;color:#e4e6ea;">Volumen</span>
<div style="left:9px;top:496px;width:1006px;height:17px;background:#000;"></div>
<div style="left:9px;top:496px;width:110px;height:17px;background:#efecd0;"></div>
<div style="left:242px;top:496px;width:223px;height:17px;background:#008000;"></div>
<span class="v" style="top:498.5px;left:12.5px;font-size:12px;letter-spacing:0.35px;color:#000;">EAR</span>
<span class="v y" style="top:498.5px;right:935.5px;font-size:12px;letter-spacing:0.35px;">0.081</span>
<span class="v" style="top:498.5px;right:831px;font-size:12px;letter-spacing:0.35px;">+0.001</span>
<span class="v" style="top:498.5px;right:714.5px;font-size:12px;letter-spacing:0.35px;">1.25%</span>
<span class="v y" style="top:498.5px;right:618.5px;font-size:12px;letter-spacing:0.35px;">27,538</span>
<span class="v y" style="top:498.5px;right:528.5px;font-size:12px;letter-spacing:0.35px;">0.078</span>
<span class="v y" style="top:498.5px;right:442px;font-size:12px;letter-spacing:0.35px;">0.087</span>
<span class="v y" style="top:498.5px;right:356px;font-size:12px;letter-spacing:0.35px;">96,300</span>
<span class="v y" style="top:498.5px;right:259px;font-size:12px;letter-spacing:0.35px;">100,000</span>
<span class="v y" style="top:498.5px;right:163px;font-size:12px;letter-spacing:0.35px;">172K</span>
<svg style="left:7px;top:519px" width="9.5" height="9.5" viewBox="0 0 9.5 9.5"><circle cx="4.75" cy="4.75" r="4.5" fill="#3a3a3a"/><polygon points="2.3,6 7.2,6 4.75,2.6" fill="#fff"/></svg>
<svg style="left:20px;top:519px" width="9.5" height="9.5" viewBox="0 0 9.5 9.5"><circle cx="4.75" cy="4.75" r="4.5" fill="#3a3a3a"/><polygon points="2.3,3.4 7.2,3.4 4.75,6.8" fill="#fff"/></svg>
<svg style="left:0px;top:523px" width="1018" height="3" viewBox="0 0 1018 3"><circle cx="34.4" cy="1.5" r="1.25" fill="#2c2e30"/><circle cx="43.5" cy="1.5" r="1.25" fill="#2c2e30"/><circle cx="52.6" cy="1.5" r="1.25" fill="#2c2e30"/><circle cx="61.7" cy="1.5" r="1.25" fill="#2c2e30"/><circle cx="70.8" cy="1.5" r="1.25" fill="#2c2e30"/><circle cx="79.9" cy="1.5" r="1.25" fill="#2c2e30"/><circle cx="89.0" cy="1.5" r="1.25" fill="#2c2e30"/><circle cx="98.1" cy="1.5" r="1.25" fill="#2c2e30"/><circle cx="107.2" cy="1.5" r="1.25" fill="#2c2e30"/><circle cx="116.3" cy="1.5" r="1.25" fill="#2c2e30"/><circle cx="125.4" cy="1.5" r="1.25" fill="#2c2e30"/><circle cx="134.5" cy="1.5" r="1.25" fill="#2c2e30"/><circle cx="143.6" cy="1.5" r="1.25" fill="#2c2e30"/><circle cx="152.7" cy="1.5" r="1.25" fill="#2c2e30"/><circle cx="161.8" cy="1.5" r="1.25" fill="#2c2e30"/><circle cx="170.9" cy="1.5" r="1.25" fill="#2c2e30"/><circle cx="180.0" cy="1.5" r="1.25" fill="#2c2e30"/><circle cx="189.1" cy="1.5" r="1.25" fill="#2c2e30"/><circle cx="198.2" cy="1.5" r="1.25" fill="#2c2e30"/><circle cx="207.3" cy="1.5" r="1.25" fill="#2c2e30"/><circle cx="216.4" cy="1.5" r="1.25" fill="#2c2e30"/><circle cx="225.5" cy="1.5" r="1.25" fill="#2c2e30"/><circle cx="234.6" cy="1.5" r="1.25" fill="#2c2e30"/><circle cx="243.7" cy="1.5" r="1.25" fill="#2c2e30"/><circle cx="252.8" cy="1.5" r="1.25" fill="#2c2e30"/><circle cx="261.9" cy="1.5" r="1.25" fill="#2c2e30"/><circle cx="271.0" cy="1.5" r="1.25" fill="#2c2e30"/><circle cx="280.1" cy="1.5" r="1.25" fill="#2c2e30"/><circle cx="289.2" cy="1.5" r="1.25" fill="#2c2e30"/><circle cx="298.3" cy="1.5" r="1.25" fill="#2c2e30"/><circle cx="307.4" cy="1.5" r="1.25" fill="#2c2e30"/><circle cx="316.5" cy="1.5" r="1.25" fill="#2c2e30"/><circle cx="325.6" cy="1.5" r="1.25" fill="#2c2e30"/><circle cx="334.7" cy="1.5" r="1.25" fill="#2c2e30"/><circle cx="343.8" cy="1.5" r="1.25" fill="#2c2e30"/><circle cx="352.9" cy="1.5" r="1.25" fill="#2c2e30"/><circle cx="362.0" cy="1.5" r="1.25" fill="#2c2e30"/><circle cx="371.1" cy="1.5" r="1.25" fill="#2c2e30"/><circle cx="380.2" cy="1.5" r="1.25" fill="#2c2e30"/><circle cx="389.3" cy="1.5" r="1.25" fill="#2c2e30"/><circle cx="398.4" cy="1.5" r="1.25" fill="#2c2e30"/><circle cx="407.5" cy="1.5" r="1.25" fill="#2c2e30"/><circle cx="416.6" cy="1.5" r="1.25" fill="#2c2e30"/><circle cx="425.7" cy="1.5" r="1.25" fill="#2c2e30"/><circle cx="434.8" cy="1.5" r="1.25" fill="#2c2e30"/><circle cx="443.9" cy="1.5" r="1.25" fill="#2c2e30"/><circle cx="453.0" cy="1.5" r="1.25" fill="#2c2e30"/><circle cx="462.1" cy="1.5" r="1.25" fill="#2c2e30"/><circle cx="471.2" cy="1.5" r="1.25" fill="#2c2e30"/><circle cx="480.3" cy="1.5" r="1.25" fill="#2c2e30"/><circle cx="489.4" cy="1.5" r="1.25" fill="#2c2e30"/><circle cx="498.5" cy="1.5" r="1.25" fill="#2c2e30"/><circle cx="507.6" cy="1.5" r="1.25" fill="#2c2e30"/><circle cx="516.7" cy="1.5" r="1.25" fill="#2c2e30"/><circle cx="525.8" cy="1.5" r="1.25" fill="#2c2e30"/><circle cx="534.9" cy="1.5" r="1.25" fill="#2c2e30"/><circle cx="544.0" cy="1.5" r="1.25" fill="#2c2e30"/><circle cx="553.1" cy="1.5" r="1.25" fill="#2c2e30"/><circle cx="562.2" cy="1.5" r="1.25" fill="#2c2e30"/><circle cx="571.3" cy="1.5" r="1.25" fill="#2c2e30"/><circle cx="580.4" cy="1.5" r="1.25" fill="#2c2e30"/><circle cx="589.5" cy="1.5" r="1.25" fill="#2c2e30"/><circle cx="598.6" cy="1.5" r="1.25" fill="#2c2e30"/><circle cx="607.7" cy="1.5" r="1.25" fill="#2c2e30"/><circle cx="616.8" cy="1.5" r="1.25" fill="#2c2e30"/><circle cx="625.9" cy="1.5" r="1.25" fill="#2c2e30"/><circle cx="635.0" cy="1.5" r="1.25" fill="#2c2e30"/><circle cx="644.1" cy="1.5" r="1.25" fill="#2c2e30"/><circle cx="653.2" cy="1.5" r="1.25" fill="#2c2e30"/><circle cx="662.3" cy="1.5" r="1.25" fill="#2c2e30"/><circle cx="671.4" cy="1.5" r="1.25" fill="#2c2e30"/><circle cx="680.5" cy="1.5" r="1.25" fill="#2c2e30"/><circle cx="689.6" cy="1.5" r="1.25" fill="#2c2e30"/><circle cx="698.7" cy="1.5" r="1.25" fill="#2c2e30"/><circle cx="707.8" cy="1.5" r="1.25" fill="#2c2e30"/><circle cx="716.9" cy="1.5" r="1.25" fill="#2c2e30"/><circle cx="726.0" cy="1.5" r="1.25" fill="#2c2e30"/><circle cx="735.1" cy="1.5" r="1.25" fill="#2c2e30"/><circle cx="744.2" cy="1.5" r="1.25" fill="#2c2e30"/><circle cx="753.3" cy="1.5" r="1.25" fill="#2c2e30"/><circle cx="762.4" cy="1.5" r="1.25" fill="#2c2e30"/><circle cx="771.5" cy="1.5" r="1.25" fill="#2c2e30"/><circle cx="780.6" cy="1.5" r="1.25" fill="#2c2e30"/><circle cx="789.7" cy="1.5" r="1.25" fill="#2c2e30"/><circle cx="798.8" cy="1.5" r="1.25" fill="#2c2e30"/><circle cx="807.9" cy="1.5" r="1.25" fill="#2c2e30"/><circle cx="817.0" cy="1.5" r="1.25" fill="#2c2e30"/><circle cx="826.1" cy="1.5" r="1.25" fill="#2c2e30"/><circle cx="835.2" cy="1.5" r="1.25" fill="#2c2e30"/><circle cx="844.3" cy="1.5" r="1.25" fill="#2c2e30"/><circle cx="853.4" cy="1.5" r="1.25" fill="#2c2e30"/><circle cx="862.5" cy="1.5" r="1.25" fill="#2c2e30"/><circle cx="871.6" cy="1.5" r="1.25" fill="#2c2e30"/><circle cx="880.7" cy="1.5" r="1.25" fill="#2c2e30"/><circle cx="889.8" cy="1.5" r="1.25" fill="#2c2e30"/><circle cx="898.9" cy="1.5" r="1.25" fill="#2c2e30"/><circle cx="908.0" cy="1.5" r="1.25" fill="#2c2e30"/><circle cx="917.1" cy="1.5" r="1.25" fill="#2c2e30"/><circle cx="926.2" cy="1.5" r="1.25" fill="#2c2e30"/><circle cx="935.3" cy="1.5" r="1.25" fill="#2c2e30"/><circle cx="944.4" cy="1.5" r="1.25" fill="#2c2e30"/><circle cx="953.5" cy="1.5" r="1.25" fill="#2c2e30"/><circle cx="962.6" cy="1.5" r="1.25" fill="#2c2e30"/><circle cx="971.7" cy="1.5" r="1.25" fill="#2c2e30"/><circle cx="980.8" cy="1.5" r="1.25" fill="#2c2e30"/><circle cx="989.9" cy="1.5" r="1.25" fill="#2c2e30"/><circle cx="999.0" cy="1.5" r="1.25" fill="#2c2e30"/><circle cx="1008.1" cy="1.5" r="1.25" fill="#2c2e30"/></svg>
<span class="v" style="top:533px;left:-20.5px;width:300px;text-align:center;font-size:12px;letter-spacing:0.25px;color:#f0f0f0;">Bid-Volumen</span>
<span class="v" style="top:550px;left:-20.5px;width:300px;text-align:center;font-size:12px;letter-spacing:0.25px;color:#f0f0f0;">373,484</span>
<div style="left:4px;top:547px;width:250px;height:1px;background:#f0f0f0;"></div>
<span class="v" style="top:542px;left:225.5px;width:300px;text-align:center;font-size:12px;letter-spacing:0.25px;color:#f0f0f0;">Preis</span>
<span class="v" style="top:533px;left:462.5px;width:300px;text-align:center;font-size:12px;letter-spacing:0.25px;color:#f0f0f0;">Ask-Volumen</span>
<span class="v" style="top:550px;left:463px;width:300px;text-align:center;font-size:12px;letter-spacing:0.25px;color:#f0f0f0;">425,948</span>
<div style="left:494px;top:547px;width:237px;height:1px;background:#f0f0f0;"></div>
<span class="v" style="top:541.5px;left:719.5px;width:300px;text-align:center;font-size:12px;letter-spacing:0.25px;color:#f0f0f0;">Histogramm</span>
<div style="left:733px;top:563px;width:272px;height:135px;background:#dcdcc6;"></div>
<div style="left:733px;top:563px;width:1px;height:135px;background:#f2f0cc;"></div>
<div style="left:4px;top:563px;width:252px;height:17px;background:#f2e67f;"></div>
<div style="left:256px;top:563px;width:238px;height:17px;background:#d2d2c0;"></div>
<div style="left:494px;top:563px;width:239px;height:17px;background:#7bc877;"></div>
<span class="v" style="top:566.3px;right:682px;font-size:12px;letter-spacing:0.35px;color:#000;">0.084</span>
<div style="left:734px;top:563px;width:271px;height:1px;background:#f2f0cc;"></div>
<div style="left:4px;top:580px;width:252px;height:17px;background:#fef387;"></div>
<div style="left:256px;top:580px;width:238px;height:17px;background:#dcdcc8;"></div>
<div style="left:494px;top:580px;width:239px;height:17px;background:#81d27d;"></div>
<span class="v" style="top:583.3px;right:682px;font-size:12px;letter-spacing:0.35px;color:#000;">0.083</span>
<div style="left:734px;top:579px;width:271px;height:2px;background:#f2f0cc;"></div>
<div style="left:4px;top:597px;width:252px;height:17px;background:#f2e67f;"></div>
<div style="left:256px;top:597px;width:238px;height:17px;background:#d2d2c0;"></div>
<div style="left:494px;top:597px;width:239px;height:17px;background:#7bc877;"></div>
<span class="v" style="top:600.3px;right:682px;font-size:12px;letter-spacing:0.35px;color:#000;">0.082</span>
<div style="left:734px;top:596px;width:271px;height:2px;background:#f2f0cc;"></div>
<div style="left:4px;top:614px;width:252px;height:17px;background:#fef387;"></div>
<div style="left:256px;top:614px;width:238px;height:17px;background:#175c80;"></div>
<div style="left:494px;top:614px;width:239px;height:17px;background:#81d27d;"></div>
<span class="v" style="top:617.3px;right:681.7px;font-size:12px;letter-spacing:0.35px;color:#fff;letter-spacing:0.6px;">100,000 @ 0.081</span>
<div style="left:734px;top:613px;width:271px;height:2px;background:#f2f0cc;"></div>
<div style="left:4px;top:631px;width:252px;height:17px;background:#f2e67f;"></div>
<div style="left:256px;top:631px;width:238px;height:17px;background:#cc0000;"></div>
<div style="left:494px;top:631px;width:239px;height:17px;background:#7bc877;"></div>
<span class="v" style="top:633.6px;right:682px;font-family:'DejaVu Serif',serif;font-weight:bold;font-size:13px;color:#fff;">0.080</span>
<div style="left:734px;top:630px;width:271px;height:2px;background:#f2f0cc;"></div>
<div style="left:4px;top:648px;width:252px;height:17px;background:#fef387;"></div>
<div style="left:256px;top:648px;width:238px;height:17px;background:#dcdcc8;"></div>
<div style="left:494px;top:648px;width:239px;height:17px;background:#81d27d;"></div>
<span class="v" style="top:651.3px;right:682px;font-size:12px;letter-spacing:0.35px;color:#000;">0.079</span>
<div style="left:734px;top:647px;width:271px;height:2px;background:#f2f0cc;"></div>
<div style="left:4px;top:665px;width:252px;height:17px;background:#f2e67f;"></div>
<div style="left:256px;top:665px;width:238px;height:17px;background:#fef387;"></div>
<div style="left:494px;top:665px;width:239px;height:17px;background:#7bc877;"></div>
<span class="v" style="top:668.3px;right:682px;font-size:12px;letter-spacing:0.35px;color:#000;">0.078</span>
<div style="left:734px;top:664px;width:271px;height:2px;background:#f2f0cc;"></div>
<div style="left:4px;top:682px;width:252px;height:16px;background:#fef387;"></div>
<div style="left:256px;top:682px;width:238px;height:16px;background:#dcdcc8;"></div>
<div style="left:494px;top:682px;width:239px;height:16px;background:#81d27d;"></div>
<span class="v" style="top:685.3px;right:682px;font-size:12px;letter-spacing:0.35px;color:#000;">0.077</span>
<div style="left:734px;top:681px;width:271px;height:2px;background:#f2f0cc;"></div>
<span class="v" style="top:668.3px;right:920.5px;font-size:12px;letter-spacing:0.35px;color:#000;">27,538</span>
<div style="left:734px;top:615px;width:217.5px;height:15px;background:#175c80;"></div>
<div style="left:734px;top:632px;width:82px;height:15px;background:#cc0000;"></div>
<div style="left:1011px;top:568px;width:2px;height:124px;background:#2c2c2c;"></div>
<svg style="left:1006px;top:685px" width="12" height="12" viewBox="0 0 12 12"><circle cx="6" cy="6" r="6" fill="#3a3a3a"/><polygon points="3,4.3 9,4.3 6,8.6" fill="#fff"/></svg>
<svg style="left:1006px;top:564px" width="12" height="12" viewBox="0 0 12 12"><circle cx="6" cy="6" r="6" fill="#3a3a3a"/><polygon points="3,7.7 9,7.7 6,3.4" fill="#fff"/></svg>
<div style="left:1008.2px;top:623px;width:7.6px;height:15px;background:#3a3a3a;border-radius:50%;"></div>
<svg style="left:1030px;top:402.5px" width="10.5" height="11.5" viewBox="0 0 10 11"><path d="M0.5,10.5 L3,5.5 L4.5,7 L6,3.5 L7.5,4.5 L9.5,0.5 L7,7.5 L5.5,6.5 L4,9.5 L3,8.5 Z" fill="#f0b820"/></svg>
<svg style="left:1119.5px;top:402.6px" width="13" height="13" viewBox="0 0 13 13">
<path d="M1,2.6 Q0.4,2.9 0.4,3.6 V9.6 Q0.4,10.3 1,10.6 L6.2,12.8 L6.2,4.8 Z" fill="#2fbe2f"/>
<path d="M12,2.6 Q12.6,2.9 12.6,3.6 V9.6 Q12.6,10.3 12,10.6 L6.2,12.8 L6.2,4.8 Z" fill="#168c16"/>
<path d="M1,2.6 L5.8,0.4 Q6.5,0.2 7.2,0.4 L12,2.6 L6.2,5 Z" fill="#6fe46f"/></svg>
<svg style="left:1138px;top:406px" width="6" height="4" viewBox="0 0 6 4"><polygon points="0,0 6,0 3.0,4" fill="#777"/></svg>
<svg style="left:1156px;top:403px" width="10" height="10" viewBox="0 0 10 10"><path d="M0.3,0.3 L9.7,9.7 M9.7,0.3 L0.3,9.7" stroke="#d4d4d4" stroke-width="0.9" fill="none"/></svg>
<div style="left:1025px;top:416px;width:147px;height:1px;background:#3a3a3a;"></div>
<span class="tb" style="top:421.5px;left:1041px;font-size:9.5px;">EAR</span>
<span class="tg" style="top:424.5px;left:1065px;font-size:7px;">ASX</span>
<svg style="left:1083px;top:425px" width="7" height="4" viewBox="0 0 7 4"><polygon points="0,0 7,0 3.5,4" fill="#fff"/></svg>
<span class="v" style="top:449.2px;left:1055px;font-size:10px;letter-spacing:0.5px;color:#f2f2f2;">Markttiefe</span>
<span class="v" style="top:477.2px;left:1055px;font-size:10px;letter-spacing:0.5px;color:#f2f2f2;">Time &amp; Sales</span>
<span class="v" style="top:505.2px;left:1055px;font-size:10px;letter-spacing:0.5px;color:#f2f2f2;">Price History</span>
<span class="v" style="top:533.2px;left:1055px;font-size:10px;letter-spacing:0.5px;color:#f2f2f2;">Optionskette</span>
<span class="v" style="top:561.2px;left:1055px;font-size:10px;letter-spacing:0.5px;color:#f2f2f2;">Fundamentals</span>
<span class="v" style="top:589.2px;left:1055px;font-size:10px;letter-spacing:0.5px;color:#f2f2f2;">Warnung</span>
<span class="v" style="top:617.2px;left:1055px;font-size:10px;letter-spacing:0.5px;color:#f2f2f2;">Nachrichten</span>
<span class="v" style="top:645.2px;left:1055px;font-size:10px;letter-spacing:0.5px;color:#f2f2f2;">Chart</span>
<span class="v" style="top:673.2px;left:1055px;font-size:10px;letter-spacing:0.5px;color:#f2f2f2;">Analystenforschung</span>
<svg style="left:1035.5px;top:446px" width="15" height="15" viewBox="0 0 15 15"><path d="M7.5,2 L11.7,6 H9.2 V9.6 H11.7 L7.5,13.4 L3.3,9.6 H5.8 V6 H3.3 Z" fill="#7f97b2"/><path d="M7.5,2 L3.3,6 H5.8 V9.6 H3.3 L7.5,13.4 Z" fill="#c0cfe0"/></svg>
<svg style="left:1035.5px;top:474px" width="15" height="15" viewBox="0 0 15 15"><circle cx="6.5" cy="6.5" r="6" fill="#e4e8ec" stroke="#aab" stroke-width="0.8"/><path d="M4,3.5 L6.5,6.5 L9.5,5" stroke="#333" stroke-width="1.1" fill="none"/><circle cx="11" cy="11" r="3.6" fill="#58a858"/><path d="M12.3,9.6 C10.5,8.6 9.6,10.4 11,11 C12.6,11.6 11.4,13.4 9.7,12.3" stroke="#fff" stroke-width="0.9" fill="none"/></svg>
<svg style="left:1035.5px;top:502px" width="15" height="15" viewBox="0 0 15 15"><path d="M10.5,3 C7,0.5 3,2.5 5,5.5 C7,7.5 11,7.5 11,10.5 C10.5,13.5 5.5,13 3.5,11" stroke="#d4d4d4" stroke-width="2.2" fill="none"/><path d="M7.5,0 V15" stroke="#c0c0c0" stroke-width="1.2"/><ellipse cx="11" cy="12" rx="3" ry="1.8" transform="rotate(35 11 12)" fill="none" stroke="#e8e8e8" stroke-width="1.2"/></svg>
<svg style="left:1035.5px;top:530px" width="15" height="15" viewBox="0 0 15 15"><ellipse cx="5" cy="10" rx="4" ry="2.6" transform="rotate(-25 5 10)" fill="none" stroke="#d8d8d8" stroke-width="1.5"/><ellipse cx="10" cy="6" rx="2.2" ry="4" transform="rotate(20 10 6)" fill="none" stroke="#d8d8d8" stroke-width="1.5"/></svg>
<svg style="left:1035.5px;top:558px" width="15" height="15" viewBox="0 0 15 15"><polygon points="4,1.875 7.75,0 11.5,1.875 7.75,3.75" fill="#8fb0c8"/><polygon points="4,1.875 7.75,3.75 7.75,7.5 4,5.625" fill="#5a7c98"/><polygon points="11.5,1.875 7.75,3.75 7.75,7.5 11.5,5.625" fill="#36546e"/><polygon points="0.5,7.5 4.5,5.5 8.5,7.5 4.5,9.5" fill="#8fb0c8"/><polygon points="0.5,7.5 4.5,9.5 4.5,13.5 0.5,11.5" fill="#5a7c98"/><polygon points="8.5,7.5 4.5,9.5 4.5,13.5 8.5,11.5" fill="#36546e"/><polygon points="7,7.875 10.75,6 14.5,7.875 10.75,9.75" fill="#8fb0c8"/><polygon points="7,7.875 10.75,9.75 10.75,13.5 7,11.625" fill="#5a7c98"/><polygon points="14.5,7.875 10.75,9.75 10.75,13.5 14.5,11.625" fill="#36546e"/></svg>
<svg style="left:1035.5px;top:586px" width="15" height="15" viewBox="0 0 15 15"><path d="M1,1 L5,5" stroke="#b8a878" stroke-width="1.6"/><path d="M4,4.5 C8,2 13,5 13.5,10.5 L6.5,13.5 C3,11 2,7 4,4.5 Z" fill="#d8c88c"/><path d="M8,5 C11,6 12.5,8.5 13,10.5 L10,12 C10,9 9,7 8,5 Z" fill="#f0e6b8"/><circle cx="10.5" cy="12.8" r="1.4" fill="#a89868"/></svg>
<svg style="left:1035.5px;top:614px" width="15" height="15" viewBox="0 0 15 15"><rect x="0.5" y="0.5" width="14" height="14" rx="2.5" fill="#b89884" stroke="#d8c4b4" stroke-width="0.8"/><circle cx="4.2" cy="10.8" r="1.5" fill="#fff"/><path d="M2.8,6.5 A5.8,5.8 0 0 1 8.6,12.3" stroke="#fff" stroke-width="1.7" fill="none"/><path d="M2.8,3 A9.3,9.3 0 0 1 12.1,12.3" stroke="#fff" stroke-width="1.7" fill="none"/></svg>
<svg style="left:1035.5px;top:642px" width="15" height="15" viewBox="0 0 15 15"><rect x="0.5" y="0.5" width="14" height="13" fill="#eef0f6" stroke="#c8c8d0" stroke-width="0.6"/><path d="M1,8 L3.5,4.5 L6,6 L9,2.5 L11,4 L14,1.5" stroke="#3a8a3a" stroke-width="1.2" fill="none"/><path d="M1,12 L3.5,9.5 L6,10 L8.5,5 L11,7.5 L14,6.5" stroke="#2a5a9a" stroke-width="1.2" fill="none"/></svg>
<svg style="left:1034.5px;top:670px" width="16" height="16" viewBox="0 0 16 16"><path d="M3,6 L6,4 C4.5,1.5 8,0 8.5,2.5 L11.5,1 L13.5,5 C11,5.5 12.5,9 14.5,7.5 L15,10.5 L11,12.5 C10.5,10 7.5,11.5 9,13.5 L6,15 L4.5,11.5 C2,13 0,9.5 2.8,9 Z" fill="#5f8260"/><path d="M3,6 L6,4 C4.5,1.5 8,0 8.5,2.5 L11.5,1" stroke="#9ab89a" stroke-width="0.8" fill="none"/></svg>
</body></html>
